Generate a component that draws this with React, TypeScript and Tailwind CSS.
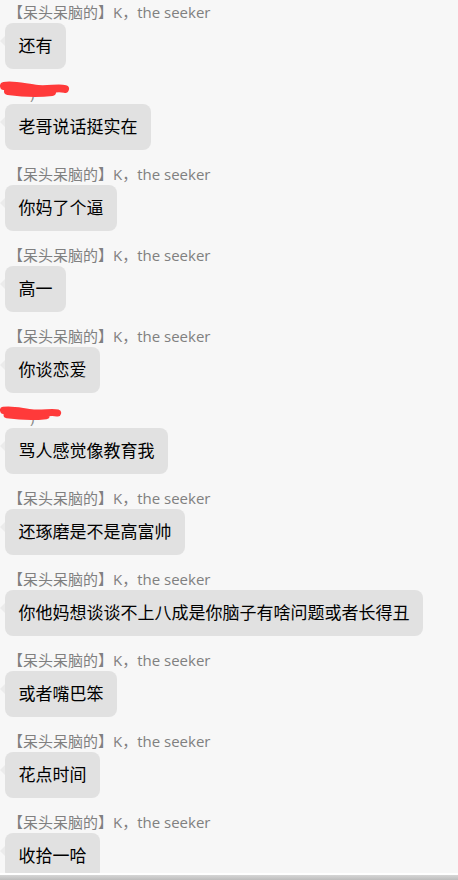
const msgs = [
  { name: "【呆头呆脑的】K，the seeker", text: "还有" },
  { name: "某某某", text: "老哥说话挺实在", hidden: true },
  { name: "【呆头呆脑的】K，the seeker", text: "你妈了个逼" },
  { name: "【呆头呆脑的】K，the seeker", text: "高一" },
  { name: "【呆头呆脑的】K，the seeker", text: "你谈恋爱" },
  { name: "某某某", text: "骂人感觉像教育我", hidden: true },
  { name: "【呆头呆脑的】K，the seeker", text: "还琢磨是不是高富帅" },
  { name: "【呆头呆脑的】K，the seeker", text: "你他妈想谈谈不上八成是你脑子有啥问题或者长得丑" },
  { name: "【呆头呆脑的】K，the seeker", text: "或者嘴巴笨" },
  { name: "【呆头呆脑的】K，the seeker", text: "花点时间" },
  { name: "【呆头呆脑的】K，the seeker", text: "收拾一哈" },
];

const Scribble = ({ wide }: { wide?: boolean }) => (
  <svg
    className="absolute left-0 top-[-3px]"
    width={wide ? 70 : 62}
    height="22"
    viewBox="0 0 70 22"
  >
    <path
      d="M4 8 C 14 6, 26 10, 38 11 C 50 12, 58 9, 65 11 M8 13 C 22 15, 36 16, 52 14"
      fill="none"
      stroke="#ff3a3a"
      strokeWidth="8"
      strokeLinecap="round"
    />
  </svg>
);

const App = () => {
  return (
    <div
      className="h-[880px] w-[458px] flex flex-col bg-[#f7f7f7] overflow-hidden"
      style={{ fontFamily: '"Open Sans", "Noto Sans CJK SC", sans-serif' }}
    >
      <div className="flex-1 overflow-hidden">
        {msgs.map((m, i) => (
          <div key={i} className="mb-3">
            <div className="relative h-[23px] pl-[8px] pt-px text-[15px] leading-[23px] text-[#808080] whitespace-nowrap">
              {m.hidden ? (
                <>
                  <span className="pl-[22px] text-[#8a8a8a]">)</span>
                  <Scribble wide={i === 1} />
                </>
              ) : (
                m.name
              )}
            </div>
            <div className="relative ml-[5px] inline-block rounded-lg bg-[#e1e1e1] px-[13.5px] py-3 text-[17px] leading-[22px] text-black">
              <span className="absolute left-[-5px] top-[13px] h-0 w-0 border-y-[5px] border-r-[5px] border-y-transparent border-r-[#ebebeb]" />
              {m.text}
            </div>
          </div>
        ))}
      </div>
      <div className="h-[2px] bg-white" />
      <div className="h-[5px] bg-gradient-to-b from-[#d6d6d6] to-[#bdbdbd]" />
    </div>
  );
};

export default App;
